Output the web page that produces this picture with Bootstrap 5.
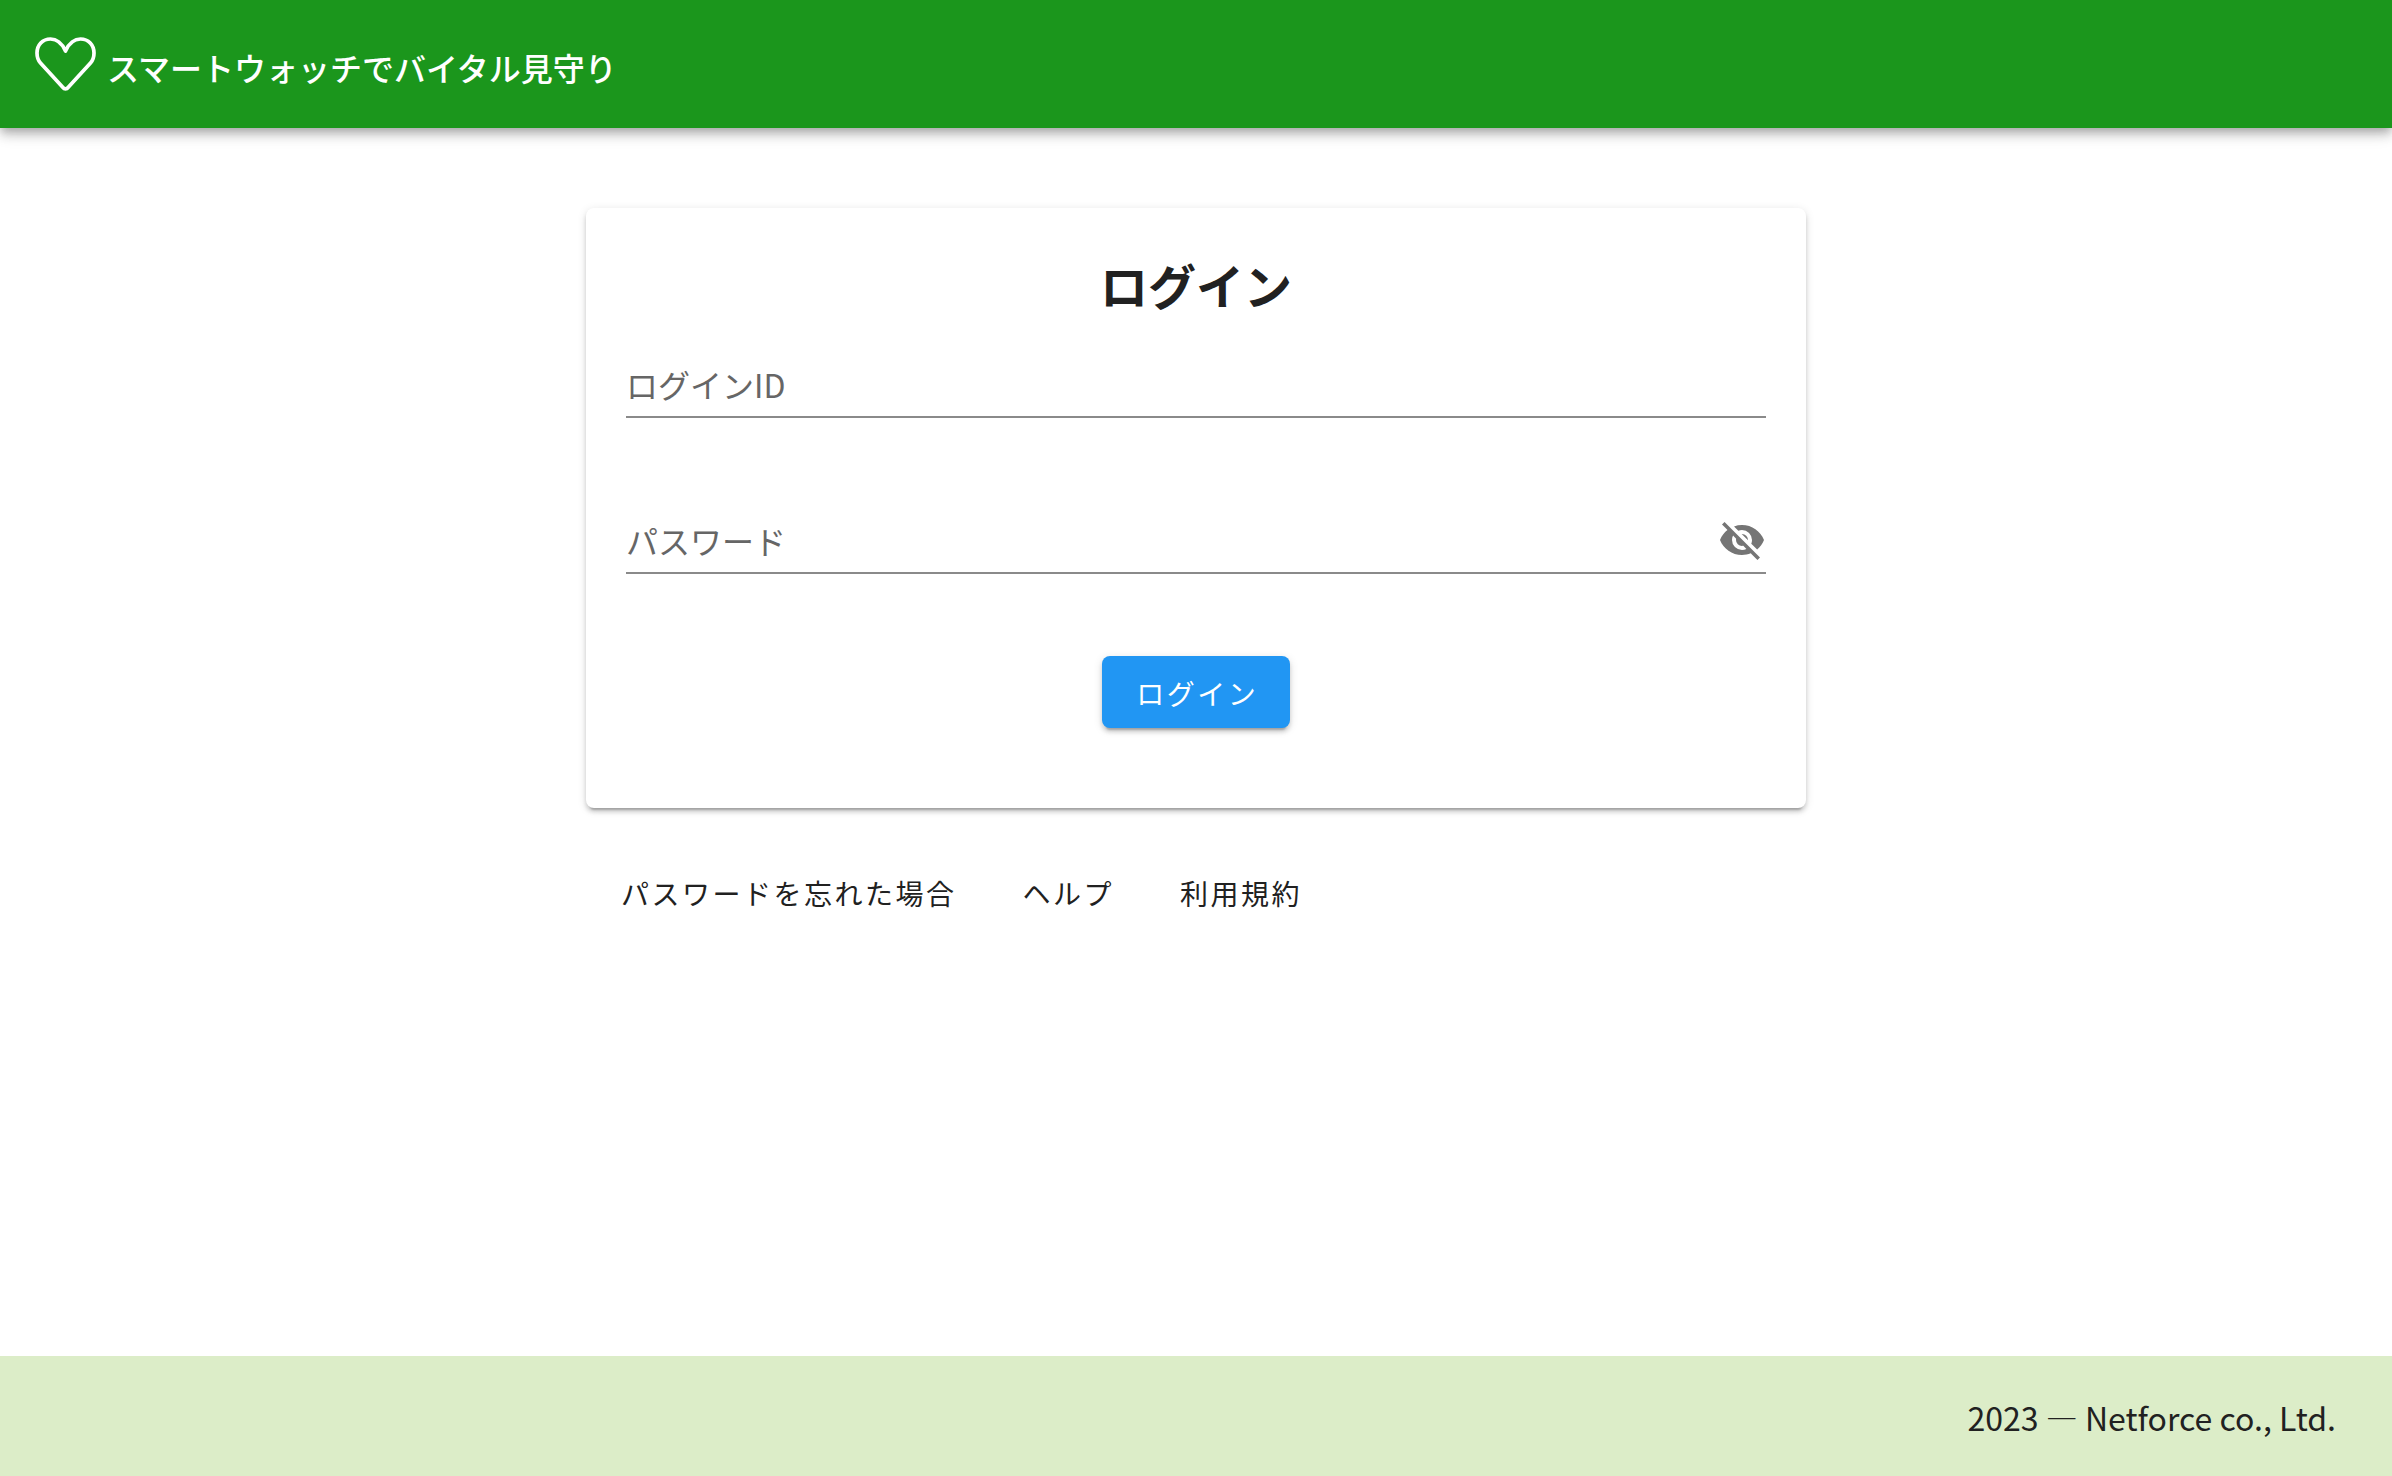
<!DOCTYPE html>
<html lang="ja">
<head>
<meta charset="utf-8">
<title>スマートウォッチでバイタル見守り</title>
<link href="https://cdn.jsdelivr.net/npm/bootstrap@5.3.0/dist/css/bootstrap.min.css" rel="stylesheet">
<style>
html, body { height: 100%; }
body { font-family: "Noto Sans CJK JP", "Noto Sans", sans-serif; color: rgba(0,0,0,.87); background: #fff; }
.app-shell { min-height: 1476px; }
.top-bar { height: 128px; padding: 0 0 0 35px; background: #1b961c; box-shadow: 0 4px 8px -2px rgba(0,0,0,.2), 0 8px 10px rgba(0,0,0,.14), 0 2px 20px rgba(0,0,0,.12); }
.top-bar .navbar-brand { margin: 0; padding: 0; color: #fff; font-size: 32px; font-weight: 500; line-height: 1; gap: 11px; }
.brand-title { padding-top: 6px; letter-spacing: 0; }
.heart-svg { width: 61px; height: 54px; }
.login-sheet { width: 1220px; height: 600px; margin-top: 80px; padding: 44px 40px 80px; border: 0; border-radius: 8px; box-shadow: 0 6px 2px -4px rgba(0,0,0,.2), 0 4px 4px rgba(0,0,0,.14), 0 2px 10px rgba(0,0,0,.12); }
.sheet-title { height: 64px; margin: 0 0 42px; font-size: 48px; font-weight: 700; line-height: 64px; color: #212121; }
.field-row { height: 60px; border-bottom: 2px solid #8a8a8a; color: #666; font-size: 32px; line-height: 52px; }
.field-row + .field-row { margin-top: 96px; }
.eye-svg { width: 48px; height: 48px; fill: #757575; margin-top: -6px; }
.login-btn { width: 188px; height: 72px; margin-top: 82px; padding: 2px 0 0 2.5px; background: #2196f3; border: 0; border-radius: 8px; color: #fff; font-size: 28px; letter-spacing: 2.5px; box-shadow: 0 6px 2px -4px rgba(0,0,0,.2), 0 4px 4px rgba(0,0,0,.14), 0 2px 10px rgba(0,0,0,.12); }
.sheet-links { width: 1220px; margin-top: 49px; padding-left: 3px; gap: 2px; }
.sheet-links a { height: 72px; padding: 0 32px; color: #212121; font-size: 28px; line-height: 72px; letter-spacing: 2.5px; text-decoration: none; }
.page-foot { height: 120px; padding: 2px 56px 0 0; background: #dcedc8; color: #212121; font-size: 32px; }
</style>
</head>
<body>
<div class="app-shell d-flex flex-column">
  <nav class="navbar top-bar flex-shrink-0">
    <a class="navbar-brand d-flex align-items-center" href="#">
      <svg class="heart-svg" viewBox="0 0 61 54" aria-hidden="true"><path d="M30.5 14C27 6 21 2 15.5 2C7.5 2 2 8 2 16C2 20 3.2 23.5 5.5 26L27.5 50C29.5 52.5 31.5 52.5 33.5 50L55.5 26C57.8 23.5 59 20 59 16C59 8 53.5 2 45.5 2C40 2 34 6 30.5 14Z" fill="none" stroke="#fff" stroke-width="3.7" stroke-linejoin="round"/></svg>
      <span class="brand-title">スマートウォッチでバイタル見守り</span>
    </a>
  </nav>
  <main class="flex-grow-1 d-flex flex-column align-items-center">
    <div class="card login-sheet">
      <h1 class="sheet-title text-center">ログイン</h1>
      <div class="field-row">ログインID</div>
      <div class="field-row d-flex justify-content-between align-items-center">
        <span class="align-self-start">パスワード</span>
        <svg class="eye-svg" viewBox="0 0 24 24" aria-hidden="true"><path d="M11.83,9L15,12.16C15,12.11 15,12.05 15,12A3,3 0 0,0 12,9C11.94,9 11.89,9 11.83,9M7.53,9.8L9.08,11.35C9.03,11.56 9,11.77 9,12A3,3 0 0,0 12,15C12.22,15 12.44,14.97 12.65,14.92L14.2,16.47C13.53,16.8 12.79,17 12,17A5,5 0 0,1 7,12C7,11.21 7.2,10.47 7.53,9.8M2,4.27L4.28,6.55L4.73,7C3.08,8.3 1.78,10 1,12C2.73,16.39 7,19.5 12,19.5C13.55,19.5 15.03,19.2 16.4,18.65L16.83,19.08L19.73,22L21,20.73L3.27,3M12,7A5,5 0 0,1 17,12C17,12.64 16.87,13.26 16.64,13.82L19.57,16.75C21.07,15.5 22.27,13.86 23,12C21.27,7.61 17,4.5 12,4.5C10.6,4.5 9.26,4.75 8,5.2L10.17,7.35C10.74,7.13 11.35,7 12,7Z"/></svg>
      </div>
      <div class="d-flex justify-content-center"><button type="button" class="btn login-btn">ログイン</button></div>
    </div>
    <div class="sheet-links d-flex">
      <a href="#">パスワードを忘れた場合</a>
      <a href="#">ヘルプ</a>
      <a href="#">利用規約</a>
    </div>
  </main>
  <footer class="page-foot flex-shrink-0 d-flex align-items-center justify-content-end">2023 — Netforce co., Ltd.</footer>
</div>
<script src="https://cdn.jsdelivr.net/npm/bootstrap@5.3.0/dist/js/bootstrap.bundle.min.js"></script>
</body>
</html>
